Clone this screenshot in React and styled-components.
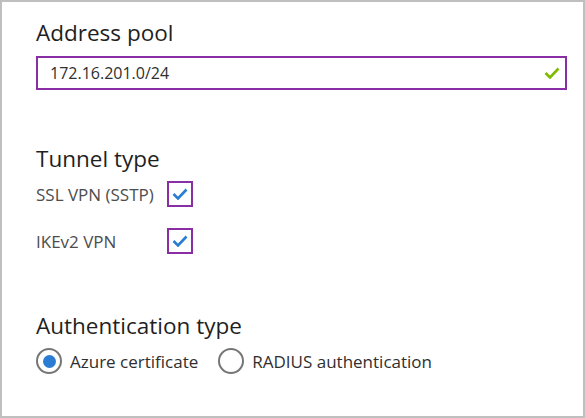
import React from "react";
import styled, { createGlobalStyle } from "styled-components";

const GlobalStyle = createGlobalStyle`
  body {
    margin: 0;
    background: #ffffff;
    font-family: "Open Sans", "Noto Sans", sans-serif;
  }
`;

const Check = ({ color, w = 16 }) => (
  <svg width={w} height="12" viewBox="0 0 16 12">
    <polyline points="1.5,6 6,10.5 14.5,1.5" fill="none" stroke={color} strokeWidth="2.6" />
  </svg>
);

export default function App() {
  return (
    <>
      <GlobalStyle />
      <Frame>
        <Heading>Address pool</Heading>
        <InputBox>
          <span>172.16.201.0/24</span>
          <Check color="#7fba00" />
        </InputBox>

        <Heading $top={54}>Tunnel type</Heading>
        <CheckList>
          <CheckRow>
            <Label>SSL VPN (SSTP)</Label>
            <CheckBox>
              <Check color="#2b7cd3" />
            </CheckBox>
          </CheckRow>
          <CheckRow>
            <Label>IKEv2 VPN</Label>
            <CheckBox>
              <Check color="#2b7cd3" />
            </CheckBox>
          </CheckRow>
        </CheckList>

        <Heading $top={57}>Authentication type</Heading>
        <RadioGroup>
          <RadioOption>
            <Radio $checked />
            <RadioLabel>Azure certificate</RadioLabel>
          </RadioOption>
          <RadioOption>
            <Radio />
            <RadioLabel>RADIUS authentication</RadioLabel>
          </RadioOption>
        </RadioGroup>
      </Frame>
    </>
  );
}

const Frame = styled.div`
  width: 585px;
  height: 418px;
  box-sizing: border-box;
  border: 2px solid #bfbfbf;
  padding: 16px 16px 0 34px;
  display: flex;
  flex-direction: column;
  align-items: flex-start;
`;

const Heading = styled.h2`
  margin: ${(p) => p.$top || 0}px 0 0;
  font-size: 22.5px;
  font-weight: 400;
  line-height: 30px;
  color: #1f1f1f;
`;

const InputBox = styled.div`
  margin-top: 8px;
  width: 531px;
  height: 34px;
  box-sizing: border-box;
  border: 2px solid #8a2ea5;
  padding: 0 5px 0 12px;
  display: flex;
  align-items: center;
  justify-content: space-between;
  font-size: 16px;
  color: #2f2f2f;
`;

const CheckList = styled.div`
  display: flex;
  flex-direction: column;
  gap: 21px;
  margin-top: 7px;
`;

const CheckRow = styled.div`
  display: flex;
  align-items: center;
`;

const Label = styled.span`
  width: 131px;
  font-size: 17px;
  color: #4d4d4d;
`;

const CheckBox = styled.div`
  width: 26px;
  height: 26px;
  box-sizing: border-box;
  border: 2px solid #8a2ea5;
  display: flex;
  align-items: center;
  justify-content: center;
`;

const RadioGroup = styled.div`
  display: flex;
  align-items: center;
  gap: 20px;
  margin-top: 7px;
`;

const RadioOption = styled.label`
  display: flex;
  align-items: center;
  gap: 8px;
`;

const Radio = styled.span`
  width: 26px;
  height: 26px;
  box-sizing: border-box;
  border-radius: 50%;
  border: 2px solid #767676;
  display: flex;
  align-items: center;
  justify-content: center;
  &::after {
    content: "";
    width: 13px;
    height: 13px;
    border-radius: 50%;
    background: ${(p) => (p.$checked ? "#2b7cd3" : "transparent")};
  }
`;

const RadioLabel = styled.span`
  font-size: 17px;
  color: #2f2f2f;
`;
